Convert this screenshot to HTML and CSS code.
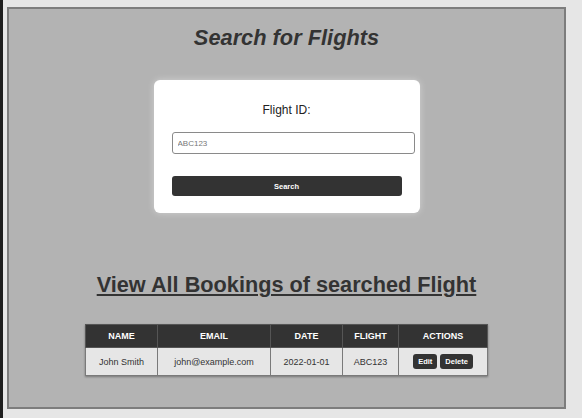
FILE: index.html
```html
<!DOCTYPE html>
<html lang="en">
<head>
<meta charset="utf-8">
<title>Search for Flights</title>
<link rel="stylesheet" href="styles.css">
</head>
<body>
<div class="frame">
  <h1 class="title">Search for Flights</h1>
  <form class="card">
    <label class="label" for="fid">Flight ID:</label>
    <input class="input" id="fid" type="text" placeholder="ABC123">
    <button class="btn-search" type="button">Search</button>
  </form>
  <h2 class="subtitle"><a href="#" class="sublink">View All Bookings of searched Flight</a></h2>
  <table class="bookings">
    <colgroup>
      <col class="c-name"><col class="c-email"><col class="c-date"><col class="c-flight"><col class="c-actions">
    </colgroup>
    <thead>
      <tr><th>NAME</th><th>EMAIL</th><th>DATE</th><th>FLIGHT</th><th>ACTIONS</th></tr>
    </thead>
    <tbody>
      <tr>
        <td>John Smith</td>
        <td>john@example.com</td>
        <td>2022-01-01</td>
        <td>ABC123</td>
        <td><div class="actions"><button class="btn-sm" type="button">Edit</button><button class="btn-sm" type="button">Delete</button></div></td>
      </tr>
    </tbody>
  </table>
</div>
</body>
</html>
```

FILE: styles.css
```css
* { box-sizing: border-box; }
html { background: #e6e6e6; }
body {
  margin: 0;
  height: 100vh;
  border-left: 3px solid #1e1e1e;
  padding: 7px 16px 0 4px;
  background: #e6e6e6;
  font-family: "Liberation Sans", Arial, sans-serif;
  color: #333;
}
.frame {
  height: 402px;
  border: 2px solid #7d7d7d;
  background: #b3b3b3;
  display: flex;
  flex-direction: column;
  align-items: center;
}
.title {
  margin: 16px 0 0;
  font-size: 21.8px;
  line-height: 25px;
  font-style: italic;
  font-weight: bold;
  color: #333;
}
.card {
  margin-top: 30px;
  width: 266px;
  padding: 23px 18px 17px;
  background: #fff;
  border-radius: 6px;
  box-shadow: 0 0 7px rgba(255,255,255,0.4);
  display: flex;
  flex-direction: column;
}
.label {
  display: block;
  text-align: center;
  font-size: 12px;
  line-height: 14px;
  color: #222;
}
.input {
  margin-top: 15px;
  width: calc(100% + 13px);
  height: 22px;
  border: 1px solid #8a8a8a;
  border-radius: 3px;
  padding: 0 5px;
  font-family: "Liberation Sans", Arial, sans-serif;
  font-size: 8px;
  color: #333;
  background: #fff;
}
.input::placeholder { color: #777; }
.btn-search {
  margin-top: 22px;
  height: 20px;
  border: 0;
  border-radius: 3px;
  background: #333;
  color: #fff;
  font-family: "Liberation Sans", Arial, sans-serif;
  font-size: 7.5px;
  font-weight: bold;
  padding: 0;
}
.subtitle {
  margin: 59px 0 0;
  font-size: 21.7px;
  line-height: 25px;
  font-weight: bold;
}
.sublink {
  color: #333;
  text-decoration: underline;
}
.bookings {
  margin-top: 27px;
  width: 402px;
  table-layout: fixed;
  border-collapse: collapse;
  border: 1px solid #777;
  box-shadow: 0 1px 2px rgba(0,0,0,0.35);
  font-size: 9px;
}
.c-name { width: 72px; }
.c-email { width: 113px; }
.c-date { width: 72px; }
.c-flight { width: 56px; }
.c-actions { width: 89px; }
.bookings th {
  height: 23px;
  background: #333;
  color: #fff;
  font-weight: bold;
  text-align: center;
  border: 1px solid #555;
  padding: 0;
}
.bookings td {
  height: 28px;
  background: #e6e6e6;
  color: #333;
  text-align: center;
  border: 1px solid #7a7a7a;
  padding: 0;
}
.actions {
  display: flex;
  justify-content: center;
  gap: 3px;
}
.btn-sm {
  height: 15px;
  padding: 0 5px;
  border: 0;
  border-radius: 3px;
  background: #333;
  color: #fff;
  font-family: "Liberation Sans", Arial, sans-serif;
  font-size: 7.5px;
  font-weight: bold;
}
```
